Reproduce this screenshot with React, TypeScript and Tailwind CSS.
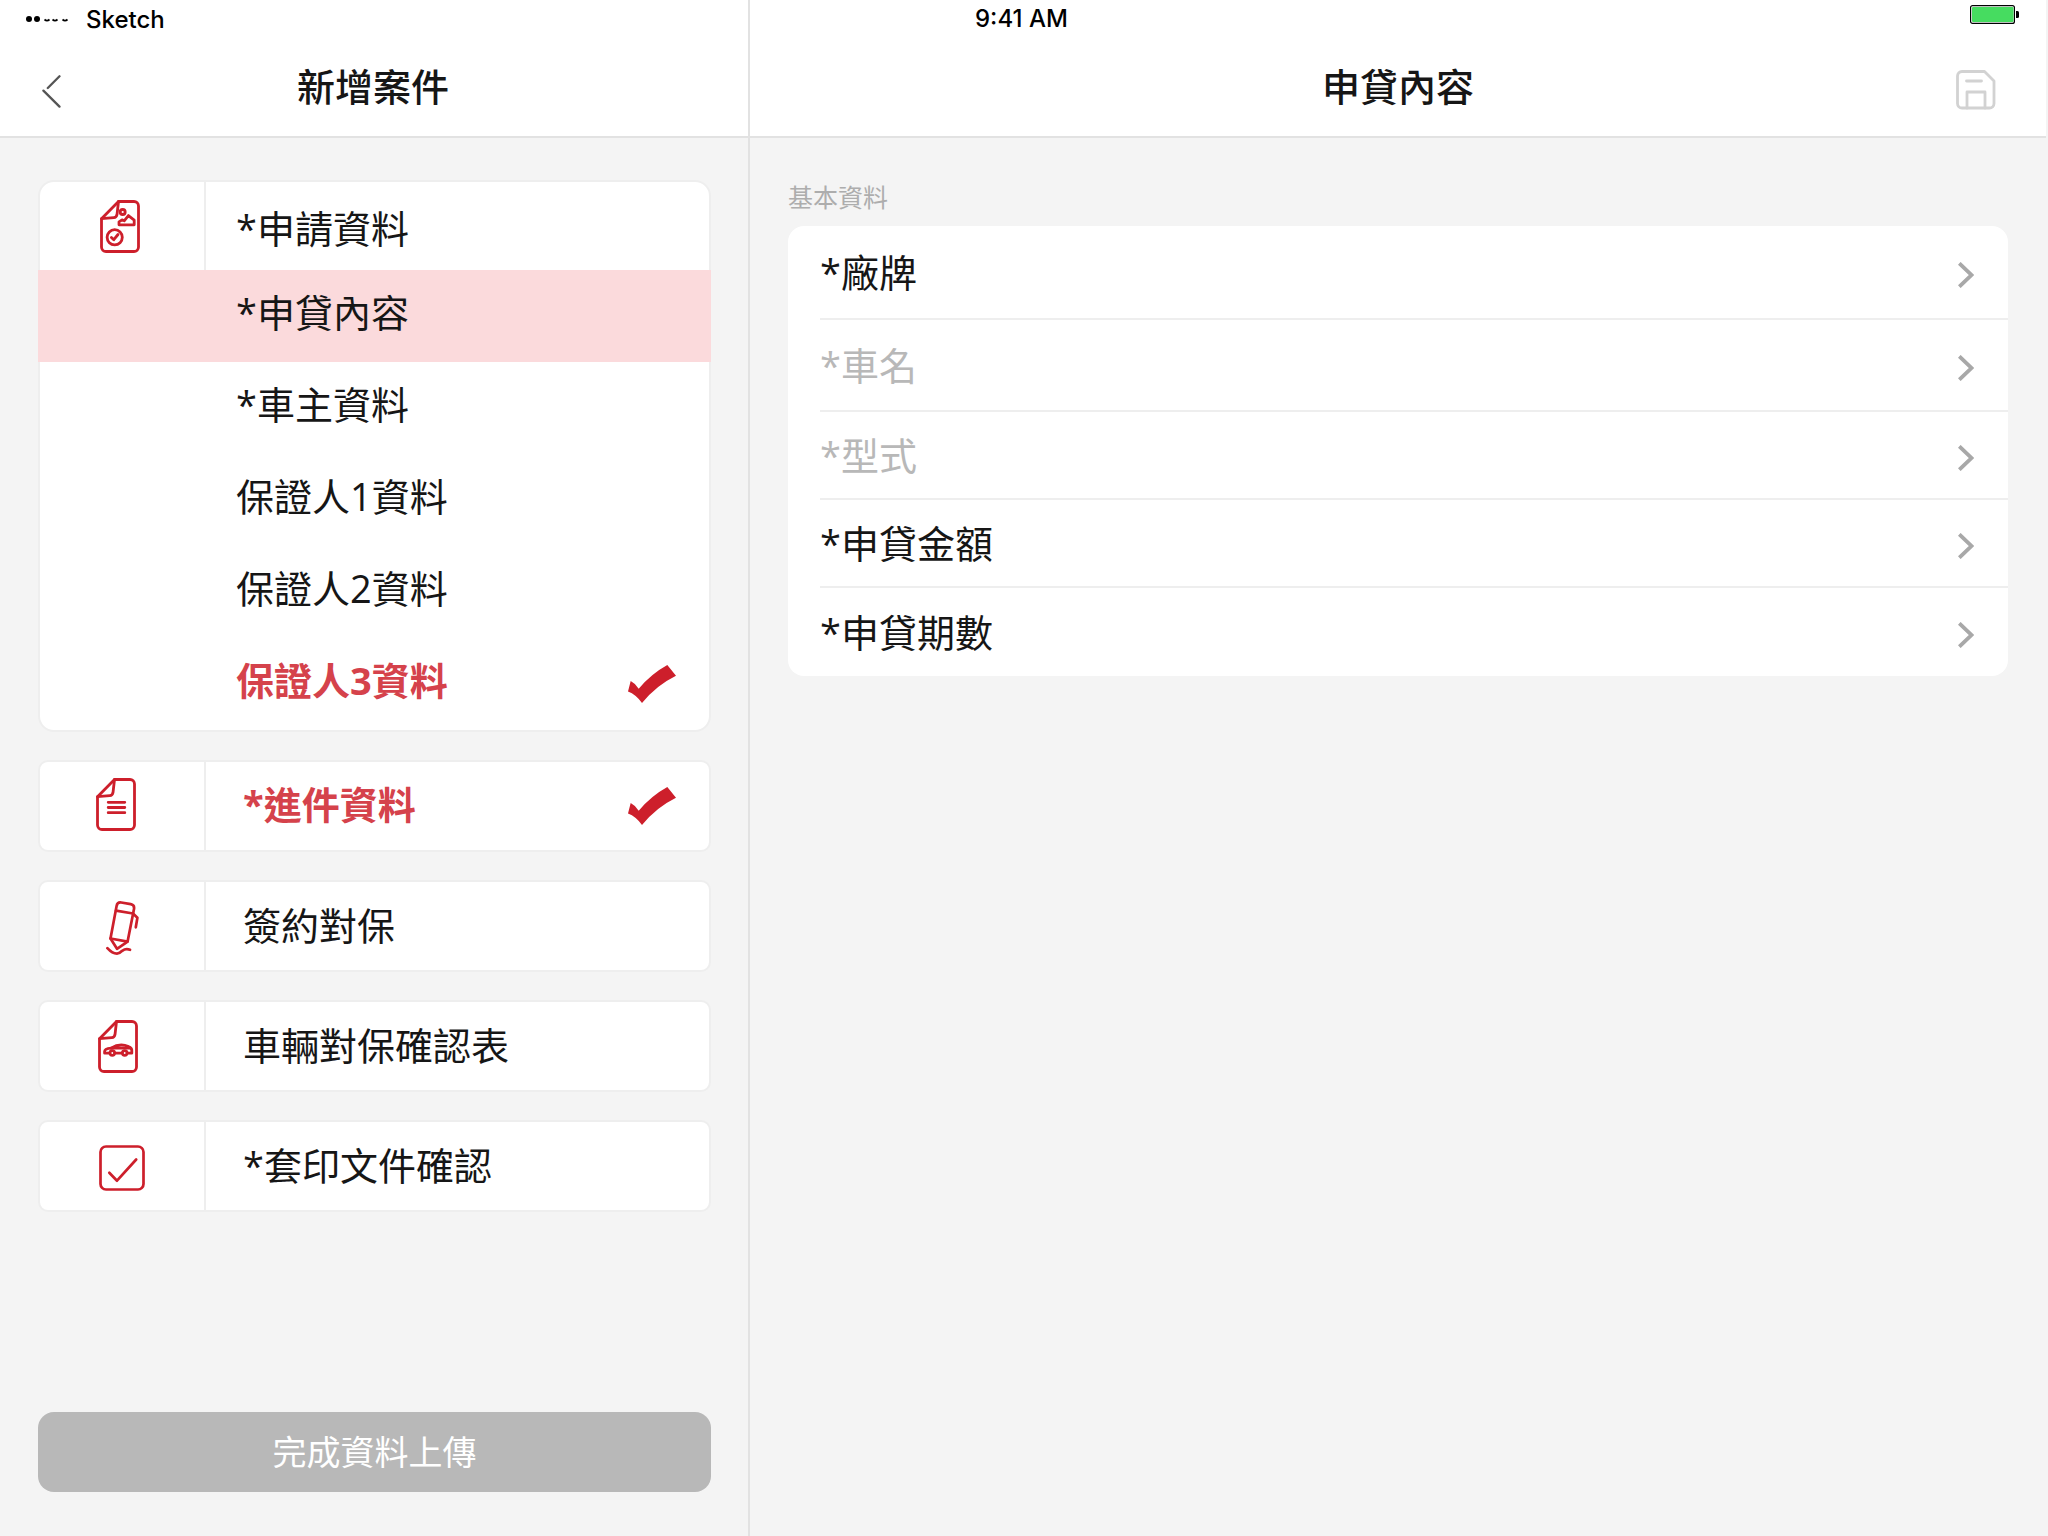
import type { ReactNode } from "react";

const RED = "#cd1f2b";

function DocOutline() {
  return (
    <>
      <path d="M18.500 1.500H34a4.500 4.500 0 0 1 4.500 4.500v41a4.500 4.500 0 0 1-4.500 4.500H6A4.500 4.500 0 0 1 1.500 47V18.700Z" />
      <path d="M18.500 1.500 17 14.600q-.5 2.900-3.200 3.100L1.500 18.700" />
    </>
  );
}

function DocIcon({ children }: { children: ReactNode }) {
  return (
    <svg
      className="h-[53px] w-10"
      viewBox="0 0 40 53"
      fill="none"
      stroke={RED}
      strokeWidth="2.800"
      strokeLinecap="round"
      strokeLinejoin="round"
      aria-hidden="true"
    >
      <DocOutline />
      {children}
    </svg>
  );
}

function ApplicationIcon() {
  return (
    <DocIcon>
      <circle cx="22.700" cy="12" r="2.500" />
      <path d="M19 24.800v-3l3-2 2.200 1 4.200-5.200 5.800 4.600v4.600Z" />
      <circle cx="14.700" cy="37.300" r="7.600" />
      <path d="m11.400 37.400 2.400 2.300 4.200-5.200" />
    </DocIcon>
  );
}

function ListIcon() {
  return (
    <DocIcon>
      <path d="M12.200 24.300h16.600M12.200 29.500h16.600M12.200 34.700h16.600" />
    </DocIcon>
  );
}

function CarIcon() {
  return (
    <DocIcon>
      <path d="M11 33.200H6.600v-1.600q0-3 6.400-3.400 9-5.500 17.500-1.600Q34 28 33.800 30.500v2.700H30M23.600 33.200h-6" />
      <path d="M13 28.200h19" />
      <circle cx="14.300" cy="33" r="2.300" />
      <circle cx="26.700" cy="33" r="2.300" />
    </DocIcon>
  );
}

function PencilIcon() {
  return (
    <svg
      className="h-[55px] w-[33px]"
      viewBox="0 0 33 55"
      fill="none"
      stroke={RED}
      strokeWidth="2.700"
      strokeLinecap="round"
      strokeLinejoin="round"
      aria-hidden="true"
    >
      <path d="M4.500 37.500 10.600 5q.7-4 4.600-3.500l9.500 1.700q4 .8 3.300 4.700L21.600 40.600Z" />
      <path d="m10 9.700 17 2.800 4.400 4.300-1.600 9.500" />
      <path d="m4.500 37.500 6.500 10.300 10.600-7.200" />
      <path d="M1.400 47.200q4.800 5.400 9.600 5.400 2.500 0 5.200-2.800 3.600-2.600 7.800-1" />
    </svg>
  );
}

function CheckboxIcon() {
  return (
    <svg
      className="size-[46px]"
      viewBox="0 0 46 46"
      fill="none"
      stroke={RED}
      strokeWidth="2.700"
      strokeLinecap="round"
      strokeLinejoin="round"
      aria-hidden="true"
    >
      <rect x="1.500" y="1.500" width="43" height="43" rx="5.500" />
      <path d="m10.300 27.700 7.700 8L37.200 14.500" />
    </svg>
  );
}

function DoneMark() {
  return (
    <svg className="h-[38px] w-12 shrink-0" viewBox="0 0 48 38" fill={RED} role="img" aria-label="完成">
      <path d="M2.700 16Q7.500 18.500 10.700 23.700 23 9 39.300 0L48 10.700Q28 20.500 14 38 8 29.500 0 26.500Z" />
    </svg>
  );
}

function Chevron() {
  return (
    <svg
      className="mt-1.5 h-[26px] w-4 shrink-0"
      viewBox="0 0 16 26"
      fill="none"
      stroke="#a8a8a8"
      strokeWidth="3.800"
      aria-hidden="true"
    >
      <path d="M1.300 1.300 13.400 13 1.300 24.700" />
    </svg>
  );
}

const applicationRows = [
  { label: "*申貸內容", selected: true },
  { label: "*車主資料" },
  { label: "保證人1資料" },
  { label: "保證人2資料" },
  { label: "保證人3資料", done: true },
];

const sections = [
  { label: "*進件資料", icon: <ListIcon />, done: true, cell: "pr-3 pb-1" },
  { label: "簽約對保", icon: <PencilIcon />, done: false, cell: "pt-1" },
  { label: "車輛對保確認表", icon: <CarIcon />, done: false, cell: "pr-2" },
  { label: "*套印文件確認", icon: <CheckboxIcon />, done: false, cell: "pt-1" },
];

const fields = [
  { label: "*廠牌", enabled: true, height: "h-[94px]" },
  { label: "*車名", enabled: false, height: "h-[92px]" },
  { label: "*型式", enabled: false, height: "h-[88px]" },
  { label: "*申貸金額", enabled: true, height: "h-[88px]" },
  { label: "*申貸期數", enabled: true, height: "h-[88px]" },
];

function StatusLeft() {
  return (
    <div className="flex h-10 items-center gap-4 pl-[25px] font-['Inter',sans-serif] text-2xl font-medium text-black">
      <svg className="h-2 w-[45px]" viewBox="0 0 45 8" aria-hidden="true">
        <circle cx="4" cy="3" r="3" />
        <circle cx="12" cy="3" r="3" />
        <path
          d="M19.500 3.500q2.500 2.200 5 0M27.500 3.500q2.500 2.200 5 0M37.500 3.500q2.500 2.200 5 0"
          fill="none"
          stroke="#000"
          strokeWidth="1.800"
        />
      </svg>
      <span>Sketch</span>
    </div>
  );
}

function StatusRight() {
  return (
    <div className="flex h-10 justify-between pr-[27px] pl-[225px] font-['Inter',sans-serif] text-2xl font-medium text-black">
      <span className="leading-[38px]">9:41 AM</span>
      <svg className="mt-[5px] h-[19px] w-[49px]" viewBox="0 0 49 19" role="img" aria-label="電池">
        <rect x=".6" y=".6" width="43.800" height="17.800" rx="2" fill="none" stroke="#000" strokeWidth="1.200" />
        <rect x="2" y="2" width="41.500" height="15" rx="1" fill="#46dc60" />
        <path d="M46 6h1.500q1.500 0 1.500 1.500v4q0 1.500-1.500 1.500H46Z" />
      </svg>
    </div>
  );
}

export default function App() {
  return (
    <div className="flex min-h-screen bg-[#f4f4f4] font-['Open_Sans','Noto_Sans_CJK_TC',sans-serif] text-[38px] leading-[52px] font-[390] text-[#161616]">
      <aside className="flex w-[750px] shrink-0 flex-col border-r-2 border-[#e2e2e2]">
        <header className="border-b-2 border-[#e2e2e2] bg-white">
          <StatusLeft />
          <div className="grid h-24 grid-cols-[80px_1fr_82px] items-center">
            <button type="button" aria-label="返回" className="pt-1.5 pl-10">
              <svg
                className="h-[34px] w-6"
                viewBox="0 0 24 34"
                fill="none"
                stroke="#555"
                strokeWidth="2.300"
                strokeLinecap="round"
                aria-hidden="true"
              >
                <path d="M19.500 2.200 7.800 14M3.400 16.600l16.100 16" />
              </svg>
            </button>
            <h1 className="pb-1 text-center font-medium">新增案件</h1>
          </div>
        </header>

        <nav className="flex flex-1 flex-col gap-7 pt-[42px] pr-[37px] pb-11 pl-[38px]">
          <section className="rounded-2xl border-2 border-[#eee] bg-white">
            <button type="button" className="flex h-[88px] w-full items-stretch text-left">
              <span className="flex w-[166px] items-center justify-center border-r-2 border-[#eee] pr-1">
                <ApplicationIcon />
              </span>
              <span className="flex items-center pt-1 pl-[30px]">*申請資料</span>
            </button>
            <ul>
              {applicationRows.map((row) => (
                <li key={row.label}>
                  <button
                    type="button"
                    aria-current={row.selected ? "page" : undefined}
                    className={
                      row.selected
                        ? "-mx-0.5 flex h-[92px] w-[calc(100%+4px)] items-center bg-[#fbdadc] pl-[198px] text-left"
                        : "flex h-[92px] w-full items-center justify-between pr-[33px] pl-[196px] text-left"
                    }
                  >
                    <span className={row.done ? "pb-2 font-bold text-[#d5424b]" : "pb-2"}>{row.label}</span>
                    {row.done && <DoneMark />}
                  </button>
                </li>
              ))}
            </ul>
          </section>

          {sections.map((section) => (
            <button
              key={section.label}
              type="button"
              className="flex h-[92px] w-full items-stretch rounded-[10px] border-2 border-[#eee] bg-white text-left"
            >
              <span className="flex w-[166px] shrink-0 items-center justify-center border-r-2 border-[#eee]">
                <span className={section.cell}>{section.icon}</span>
              </span>
              <span className="flex flex-1 items-center justify-between pr-[33px] pl-[37px]">
                <span className={section.done ? "pb-1 font-bold text-[#d5424b]" : "pb-0.5"}>{section.label}</span>
                {section.done && <DoneMark />}
              </span>
            </button>
          ))}

          <button
            type="button"
            className="mt-auto h-20 w-full rounded-2xl bg-[#b8b8b8] text-[34px] text-white"
          >
            完成資料上傳
          </button>
        </nav>
      </aside>

      <main className="flex-1">
        <header className="mr-0.5 border-b-2 border-[#e2e2e2] bg-white">
          <StatusRight />
          <div className="grid h-24 grid-cols-[90px_1fr_90px] items-center">
            <h2 className="col-start-2 pb-1 text-center font-medium">申貸內容</h2>
            <button type="button" aria-label="儲存" className="pt-1">
              <svg
                className="size-10"
                viewBox="0 0 40 40"
                fill="none"
                stroke="#d2d2d2"
                strokeWidth="2.800"
                strokeLinecap="round"
                strokeLinejoin="round"
                aria-hidden="true"
              >
                <path d="M6 1.500h22.500L38 11v22.500a4.500 4.500 0 0 1-4.500 4.500H6a4.500 4.500 0 0 1-4.500-4.500V6A4.500 4.500 0 0 1 6 1.500Z" />
                <path d="M10.500 11h15M11 38V22h18v16" />
              </svg>
            </button>
          </div>
        </header>

        <section className="pt-[43px] pr-10 pl-[38px]">
          <h3 className="h-[45px] text-[25px] leading-8 text-[#adadad]">基本資料</h3>
          <ul className="rounded-2xl bg-white pl-8">
            {fields.map((field) => (
              <li
                key={field.label}
                className={`flex border-b-2 border-[#eee] last:border-b-0 ${field.height}`}
              >
                <button
                  type="button"
                  disabled={!field.enabled}
                  className={
                    field.enabled
                      ? "flex flex-1 items-center justify-between pr-[34px] text-left"
                      : "flex flex-1 items-center justify-between pr-[34px] text-left text-[#b8b8b8]"
                  }
                >
                  <span>{field.label}</span>
                  <Chevron />
                </button>
              </li>
            ))}
          </ul>
        </section>
      </main>
    </div>
  );
}
